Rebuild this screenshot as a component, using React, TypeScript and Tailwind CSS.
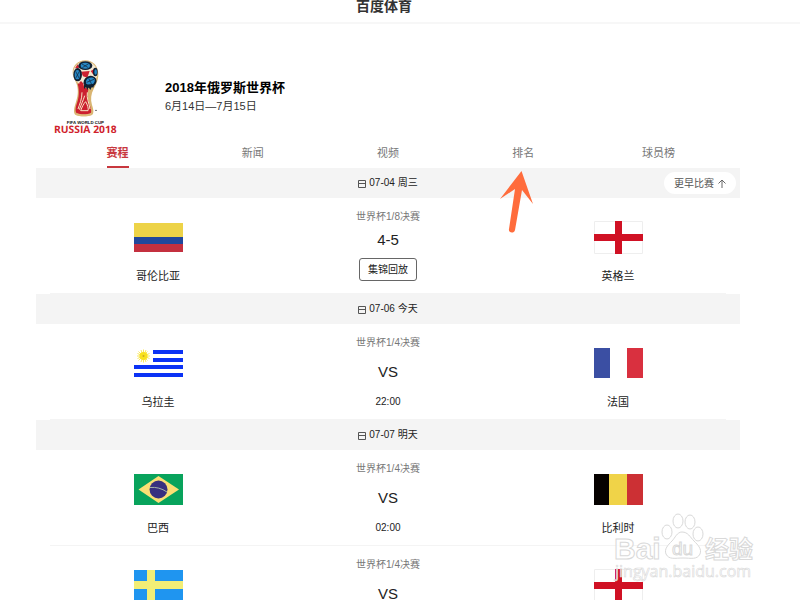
import type { ReactNode } from 'react';

const tabs = ['赛程', '新闻', '视频', '排名', '球员榜'];

interface Team {
  name: string;
  flag: ReactNode;
}

interface Match {
  round: string;
  home: Team;
  away: Team;
  score?: string;
  time?: string;
}

function Colombia() {
  return (
    <>
      <path fill="#edd348" d="M0 1h49v14H0z" />
      <path fill="#21489c" d="M0 15h49v8H0z" />
      <path fill="#c4303f" d="M0 22h49v8H0z" />
    </>
  );
}

function England() {
  return (
    <>
      <path fill="#fff" stroke="#eeeeee" d="M.5-.5h48v32H.5z" />
      <path fill="#d01124" d="M21-1h7v33h-7zM0 12h49v7H0z" />
    </>
  );
}

function Uruguay() {
  return (
    <>
      <path fill="#fff" d="M0 0h49v30H0z" />
      <path fill="#0b32f5" d="M19 2h30v4H19zM19 10h30v4H19zM0 17h49v4H0zM0 25h49v4H0z" />
      <path
        stroke="#fae85c"
        d="M3 8h13M9.500 1.500v13M4.500 3.500l9 9M13.500 3.500l-9 9M7 2l5 12M12 2l-5 12M3.500 5.500l12 5M3.500 10.500l12-5"
      />
      <circle cx="9.500" cy="8" r="4" fill="#f8e11c" />
      <circle cx="9.500" cy="8" r="1" fill="#c9ab22" />
    </>
  );
}

function France() {
  return (
    <>
      <path fill="#fff" d="M0 0h49v30H0z" />
      <path fill="#3b4fa3" d="M0 0h16v30H0z" />
      <path fill="#d9303f" d="M33 0h16v30H33z" />
    </>
  );
}

function Brazil() {
  return (
    <>
      <path fill="#08a35c" d="M0 0h49v31H0z" />
      <path fill="#fbdf74" d="M24.500 2 45 15.500 24.500 29 4.500 15.500z" />
      <circle cx="24.500" cy="15.500" r="9" fill="#38307f" />
      <path stroke="#a5b6a7" fill="none" d="M16 13.500q9-1 17 4.500" />
    </>
  );
}

function Belgium() {
  return (
    <>
      <path fill="#060200" d="M0 0h15v31H0z" />
      <path fill="#f0d348" d="M15 0h18v31H15z" />
      <path fill="#cc3034" d="M33 0h16v31H33z" />
    </>
  );
}

function Sweden() {
  return (
    <>
      <path fill="#1f95f0" d="M0 0h49v31H0z" />
      <path fill="#f2ee76" d="M13 0h8v31h-8zM0 11h49v8H0z" />
    </>
  );
}

const days: Array<{ date: string; matches: Match[] }> = [
  {
    date: '07-04 周三',
    matches: [
      {
        round: '世界杯1/8决赛',
        home: { name: '哥伦比亚', flag: <Colombia /> },
        away: { name: '英格兰', flag: <England /> },
        score: '4-5',
      },
    ],
  },
  {
    date: '07-06 今天',
    matches: [
      {
        round: '世界杯1/4决赛',
        home: { name: '乌拉圭', flag: <Uruguay /> },
        away: { name: '法国', flag: <France /> },
        time: '22:00',
      },
    ],
  },
  {
    date: '07-07 明天',
    matches: [
      {
        round: '世界杯1/4决赛',
        home: { name: '巴西', flag: <Brazil /> },
        away: { name: '比利时', flag: <Belgium /> },
        time: '02:00',
      },
      {
        round: '世界杯1/4决赛',
        home: { name: '瑞典', flag: <Sweden /> },
        away: { name: '英格兰', flag: <England /> },
        time: '22:00',
      },
    ],
  },
];

function CupLogo() {
  return (
    <svg
      viewBox="24 15 195 225"
      className="h-[75px] w-[65px] shrink-0 overflow-visible"
      role="img"
      aria-label="FIFA World Cup Russia 2018"
    >
      {/* gold silhouette, then the red body inside it */}
      <path
        fill="#d9b572"
        d="M121 16c-22 0-38 16-38 36 0 15 9 24 13 38 5 20 2 36-4 54-5 16-8 30 0 36 9 5 41 5 49 0 7-6 4-18 0-30-5-17-3-33 5-48 7-13 14-26 14-45 0-24-17-41-39-41z"
      />
      <path
        fill="#cc2030"
        d="M98 86c6 22 4 42-3 61-4 13-5 24 1 29 10 4 31 4 40 0 5-5 2-15-2-27-7-16-8-29-4-46l-12-6-7-14z"
      />
      <circle cx="121" cy="55" r="36" fill="#f5e9d2" />
      <path fill="#cc2030" d="M108 50l26-2-7 20-13-4zM137 48l12-7 6 15-11 2zM90 40l8-12 6 10zM108 78l8 8-3 16-11-18z" />
      <ellipse cx="121" cy="32" rx="21" ry="13" fill="#101f31" />
      <ellipse cx="121" cy="32" rx="14" ry="9" fill="#2787c4" />
      <path stroke="#101f31" strokeWidth="2" fill="none" d="M111 27l19 11M131 26l-19 12" />
      <ellipse cx="98" cy="59" rx="13" ry="20" fill="#101f31" />
      <ellipse cx="97" cy="59" rx="8" ry="14" fill="#2787c4" />
      <path stroke="#101f31" strokeWidth="2" fill="none" d="M92 49l10 20M103 49L92 70" />
      <ellipse cx="151" cy="51" rx="7" ry="13" fill="#101f31" />
      <ellipse cx="152" cy="51" rx="4" ry="8" fill="#2787c4" />
      <ellipse cx="135" cy="80" rx="20" ry="17" fill="#101f31" transform="rotate(-28 135 80)" />
      <ellipse cx="136" cy="79" rx="14" ry="11" fill="#2787c4" transform="rotate(-28 136 79)" />
      <path stroke="#101f31" strokeWidth="2" fill="none" d="M125 82l22-9M131 70l9 18" />
      <path fill="#101f31" d="M117 90v12l6-6 4 9 4-8 5 8 4-9 5 2 3-12z" />
      <path
        stroke="#f7e6c6"
        strokeWidth="3"
        fill="none"
        d="M111 112c0 21-7 35-12 50M119 122c-5 16-10 26-16 42M122 140c-6 6-11 16-15 27h22c3-4-2-19-7-27zM127 112c-3 18 5 30 8 50"
      />
      <path fill="#dfbd7e" d="M94 173c14 6 31 6 45 0v7c-14 5-32 5-45 0z" />
      <circle cx="153" cy="166" r="2" fill="#111" />
      <text x="121" y="206" textAnchor="middle" textRendering="geometricPrecision" className="fill-[#111] text-[13px] font-bold">
        FIFA WORLD CUP
      </text>
      <text
        x="121"
        y="235"
        textAnchor="middle"
        textRendering="geometricPrecision"
        className="fill-[#d01f2d] font-['Open_Sans',sans-serif] text-[31px] font-bold"
      >
        RUSSIA 2018
      </text>
    </svg>
  );
}

function CalendarIcon() {
  return (
    <svg viewBox="0 0 8 9" className="h-[9px] w-2" fill="none" stroke="#555" aria-hidden="true">
      <path d="M.5 1.500h7v7h-7zM.5 4.500h7" />
    </svg>
  );
}

function TeamBlock({ team }: { team: Team }) {
  return (
    <div className="flex flex-col items-center pt-6">
      <svg viewBox="0 0 49 30" className="h-[30px] w-[49px] overflow-visible" role="img" aria-label={team.name}>
        {team.flag}
      </svg>
      <p className="mt-4 text-[11px] leading-4 text-[#222]">{team.name}</p>
    </div>
  );
}

function MatchRow({ match }: { match: Match }) {
  return (
    <li className="mx-3.5 grid h-24 grid-cols-[1fr_244px_1fr] border-b border-[#f4f4f4]">
      <TeamBlock team={match.home} />
      <div className="flex flex-col items-center pt-3">
        <p className="text-[10px] leading-3.5 text-[#777]">{match.round}</p>
        {match.score ? (
          <>
            <p className="mt-1.5 text-[15px] leading-5 text-[#222]">{match.score}</p>
            <button
              type="button"
              className="mt-2 h-[23px] w-[58px] rounded-[3px] border border-[#666] bg-white text-[10px] leading-3 text-[#222]"
            >
              集锦回放
            </button>
          </>
        ) : (
          <>
            <p className="mt-3 text-[15px] leading-5 text-[#222]">VS</p>
            <p className="mt-3 text-[10px] leading-4 text-[#222]">{match.time}</p>
          </>
        )}
      </div>
      <TeamBlock team={match.away} />
    </li>
  );
}

function PointerArrow() {
  return (
    <svg viewBox="0 0 33 62" className="pointer-events-none absolute top-7 left-11 z-10 h-[62px] w-[33px]" aria-hidden="true">
      <path fill="#ff6c3c" d="M21.500 0 33 33 22 19 15 59c-1 4-7 3-6-1l6-40L0 28z" />
    </svg>
  );
}

function Watermark() {
  return (
    <svg
      viewBox="0 0 150 72"
      className="pointer-events-none absolute right-10 bottom-4 h-[72px] w-[150px]"
      aria-hidden="true"
    >
      <g fill="#fff" fillOpacity="0.800" stroke="#d9d9d9" className="font-['Liberation_Sans','Noto_Sans_CJK_SC',sans-serif]">
        <text x="4" y="47" className="text-[30px] font-bold">Bai</text>
        <ellipse cx="57" cy="20" rx="5" ry="7" />
        <ellipse cx="68" cy="9" rx="5" ry="7" />
        <ellipse cx="80" cy="10" rx="5" ry="7" />
        <ellipse cx="88" cy="22" rx="5" ry="7" />
        <path d="M72 20c-5 0-7 6-10 9-4 4-8 8-6 13 3 6 9 4 17 4s14 2 17-4c2-5-2-9-6-13-4-4-6-9-12-9z" />
        <text x="62" y="43" className="text-[19px]">du</text>
        <text x="95" y="46" className="text-[24px] font-bold">经验</text>
        <text x="5" y="65" strokeWidth="0.600" className="font-['Open_Sans',sans-serif] text-[16px]">jingyan.baidu.com</text>
      </g>
    </svg>
  );
}

export default function App() {
  return (
    <div className="relative h-screen overflow-hidden bg-white font-['Liberation_Sans','Noto_Sans_CJK_SC',sans-serif] text-[#222]">
      <header className="flex h-6 items-start justify-center border-b-2 border-[#f7f7f7] pr-8">
        <h1 className="-mt-1 text-sm leading-5 font-bold text-[#333]">百度体育</h1>
      </header>

      <main className="mr-[60px] ml-9">
        <section className="flex items-start pt-9 pl-[17px]">
          <CupLogo />
          <div className="ml-[47px] pt-[18px]">
            <h2 className="text-[13px] leading-5 font-bold text-black">2018年俄罗斯世界杯</h2>
            <p className="text-[11px] leading-4 text-[#333]">6月14日—7月15日</p>
          </div>
        </section>

        <nav className="mt-2 grid grid-cols-5 px-3.5">
          {tabs.map((tab, index) => (
            <div key={tab} className="relative flex justify-center">
              <a
                href="#"
                className={
                  index === 0
                    ? 'h-[25px] border-b-2 border-[#c8373e] text-[11px] leading-5 font-bold text-[#c8373e]'
                    : 'h-[25px] text-[11px] leading-5 text-[#777]'
                }
              >
                {tab}
              </a>
              {tab === '排名' && <PointerArrow />}
            </div>
          ))}
        </nav>

        {days.map((day, index) => (
          <section key={day.date}>
            <div className="relative flex h-[30px] items-center justify-center bg-[#f4f4f4]">
              <h3 className="flex items-center gap-[3px] text-[10px] leading-4 text-[#222]">
                <CalendarIcon />
                {day.date}
              </h3>
              {index === 0 && (
                <button
                  type="button"
                  className="absolute top-1 right-1 flex h-[22px] w-[72px] items-center justify-center gap-1 rounded-full bg-white text-[10px] text-[#555]"
                >
                  更早比赛
                  <svg viewBox="0 0 8 9" className="h-[9px] w-2" fill="none" stroke="#666" aria-hidden="true">
                    <path d="M4 9V1M.5 4.500 4 1l3.500 3.500" />
                  </svg>
                </button>
              )}
            </div>
            <ul>
              {day.matches.map((match) => (
                <MatchRow key={match.home.name} match={match} />
              ))}
            </ul>
          </section>
        ))}
      </main>

      <Watermark />
    </div>
  );
}
